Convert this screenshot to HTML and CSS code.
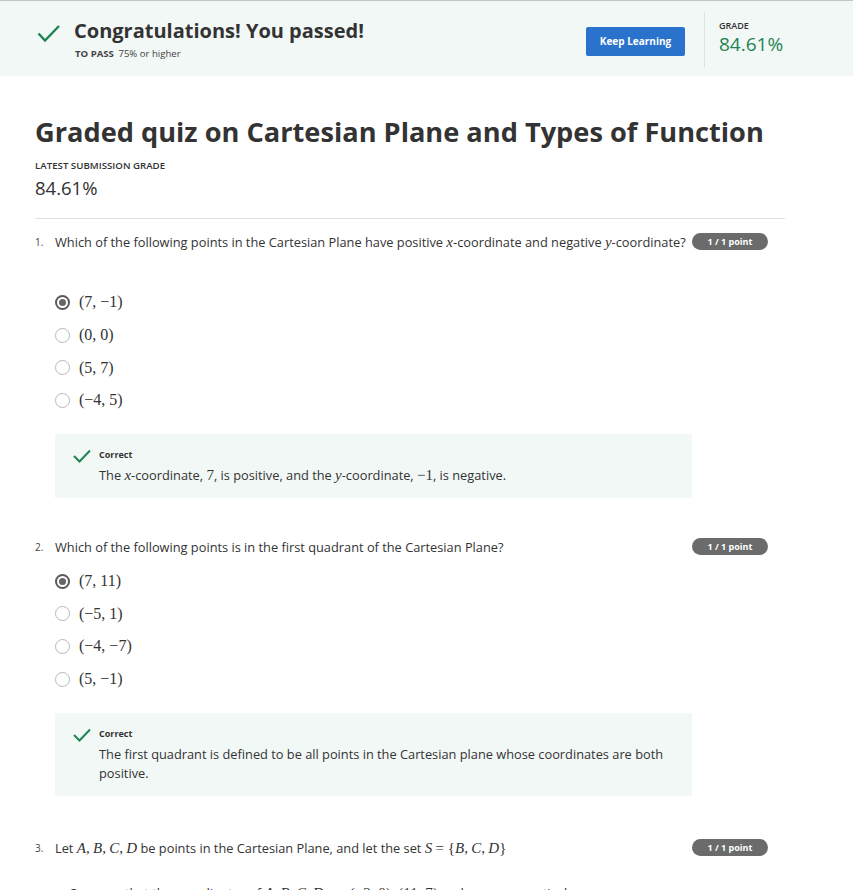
FILE: index.html
```html
<!DOCTYPE html>
<html>
<head>
<meta charset="utf-8">
<link rel="stylesheet" href="styles.css">
</head>
<body>
<header class="banner">
  <div class="banner-inner">
    <div class="pass">
      <svg class="pass-icon" width="24" height="20" viewBox="0 0 24 20"><path d="M1.5 9.5 L8 16.5 L22 2" fill="none" stroke="#1f8354" stroke-width="2.4"/></svg>
      <div class="pass-text">
        <div class="pass-title">Congratulations! You passed!</div>
        <div class="pass-sub"><b>TO PASS</b> 75% or higher</div>
      </div>
    </div>
    <div class="actions">
      <button class="btn">Keep Learning</button>
      <div class="divider"></div>
      <div class="grade">
        <div class="grade-label">GRADE</div>
        <div class="grade-value">84.61%</div>
      </div>
    </div>
  </div>
</header>

<main class="content">
  <h1 class="title">Graded quiz on Cartesian Plane and Types of Function</h1>
  <div class="latest-label">LATEST SUBMISSION GRADE</div>
  <div class="latest-value">84.61%</div>
  <hr class="sep">

  <section class="question q1">
    <div class="q-head">
      <span class="q-num">1.</span>
      <span class="q-text">Which of the following points in the Cartesian Plane have positive <i class="m">x</i>-coordinate and negative <i class="m">y</i>-coordinate?</span>
      <span class="badge">1 / 1 point</span>
    </div>
    <ul class="options first-gap">
      <li><span class="radio on"></span><span class="math">(7, −1)</span></li>
      <li><span class="radio"></span><span class="math">(0, 0)</span></li>
      <li><span class="radio"></span><span class="math">(5, 7)</span></li>
      <li><span class="radio"></span><span class="math">(−4, 5)</span></li>
    </ul>
    <div class="feedback">
      <svg class="fb-icon" width="18" height="14" viewBox="0 0 18 14"><path d="M1 7 L6.5 12.5 L17 1.5" fill="none" stroke="#1f8354" stroke-width="2"/></svg>
      <div>
        <div class="fb-label">Correct</div>
        <div class="fb-text">The <i class="m">x</i>-coordinate, <span class="mr">7</span>, is positive, and the <i class="m">y</i>-coordinate, <span class="mr">−1</span>, is negative.</div>
      </div>
    </div>
  </section>

  <section class="question q2">
    <div class="q-head">
      <span class="q-num">2.</span>
      <span class="q-text">Which of the following points is in the first quadrant of the Cartesian Plane?</span>
      <span class="badge">1 / 1 point</span>
    </div>
    <ul class="options">
      <li><span class="radio on"></span><span class="math">(7, 11)</span></li>
      <li><span class="radio"></span><span class="math">(−5, 1)</span></li>
      <li><span class="radio"></span><span class="math">(−4, −7)</span></li>
      <li><span class="radio"></span><span class="math">(5, −1)</span></li>
    </ul>
    <div class="feedback">
      <svg class="fb-icon" width="18" height="14" viewBox="0 0 18 14"><path d="M1 7 L6.5 12.5 L17 1.5" fill="none" stroke="#1f8354" stroke-width="2"/></svg>
      <div>
        <div class="fb-label">Correct</div>
        <div class="fb-text">The first quadrant is defined to be all points in the Cartesian plane whose coordinates are both positive.</div>
      </div>
    </div>
  </section>

  <section class="question q3">
    <div class="q-head">
      <span class="q-num">3.</span>
      <span class="q-text">Let <i class="m">A</i><span class="mr">,</span> <i class="m">B</i><span class="mr">,</span> <i class="m">C</i><span class="mr">,</span> <i class="m">D</i> be points in the Cartesian Plane, and let the set <i class="m">S</i> <span class="mr">= {</span><i class="m">B</i><span class="mr">,</span> <i class="m">C</i><span class="mr">,</span> <i class="m">D</i><span class="mr">}</span></span>
      <span class="badge">1 / 1 point</span>
    </div>
    <p class="q-more">Suppose that the coordinates of <i class="m">A</i>, <i class="m">B</i>, <i class="m">C</i>, <i class="m">D</i> are <span class="mr">(−2, 0), (11, 7)</span> and so on respectively.</p>
  </section>
</main>
</body>
</html>
```

FILE: styles.css
```css
* { box-sizing: border-box; }
html, body { margin: 0; padding: 0; }
body {
  font-family: "Open Sans", "Liberation Sans", sans-serif;
  color: #333;
  background: #fff;
  overflow: hidden;
}

.banner {
  border-top: 1px solid #c4c6c6;
  background: #f2f8f6;
  height: 76px;
}
.banner-inner {
  width: 750px;
  margin-left: 35px;
  height: 75px;
  display: flex;
  align-items: center;
  justify-content: space-between;
}
.pass { display: flex; align-items: flex-start; }
.pass-icon { margin: 7px 0 0 2px; }
.pass-text { margin-left: 13px; margin-top: 1px; }
.pass-title {
  font-size: 20px;
  font-weight: 700;
  line-height: 26px;
  color: #333;
}
.pass-sub {
  font-size: 9.6px;
  line-height: 14px;
  margin-top: 3px;
  margin-left: 1px;
  color: #444;
}
.pass-sub b { font-weight: 700; margin-right: 2px; }

.actions { display: flex; align-items: center; }
.btn {
  width: 99px;
  height: 29px;
  background: #2a73cc;
  color: #fff;
  border: none;
  border-radius: 2px;
  font-family: "Open Sans", sans-serif;
  font-weight: 700;
  font-size: 10px;
  padding: 0;
  margin-top: 5px;
}
.divider {
  width: 1px;
  height: 55px;
  background: #dde2e0;
  margin: 2px 14px 0 19px;
}
.grade { width: 66px; padding-bottom: 2px; }
.grade-label { font-size: 9px; font-weight: 600; line-height: 12px; color: #333; }
.grade-value { font-size: 19px; line-height: 24px; color: #1f8354; }

.content { width: 750px; margin-left: 35px; }
.title {
  font-size: 27.2px;
  font-weight: 700;
  line-height: 36px;
  margin: 38px 0 0;
  color: #333;
  white-space: nowrap;
}
.latest-label {
  margin-top: 9px;
  font-size: 9.7px;
  font-weight: 600;
  line-height: 14px;
  color: #333;
}
.latest-value {
  margin-top: 3px;
  font-size: 18.5px;
  line-height: 24px;
  color: #333;
}
.sep {
  border: none;
  border-top: 1px solid #e1e1e1;
  margin: 18px 0 0;
}

.q-head { display: flex; align-items: center; position: relative; height: 18px; }
.q-num { width: 20px; font-size: 10px; color: #444; }
.q-text { font-size: 12.8px; line-height: 18px; color: #333; white-space: nowrap; }
.badge {
  position: absolute;
  left: 657px;
  top: 0;
  width: 76px;
  height: 17px;
  border-radius: 9px;
  background: #6b6b6b;
  color: #fff;
  font-size: 9px;
  font-weight: 700;
  line-height: 17px;
  text-align: center;
}
.m { font-family: "Liberation Serif", "DejaVu Serif", serif; font-style: italic; font-size: 15px; }
.mr { font-family: "Liberation Serif", "DejaVu Serif", serif; font-size: 15px; }

.q1 { margin-top: 14px; }
.q2 { margin-top: 40px; }
.q3 { margin-top: 43px; }

.options { list-style: none; margin: 0; padding: 0 0 0 20px; }
.options.first-gap { margin-top: 35px; }
.q2 .options { margin-top: 9px; }
.options li {
  display: flex;
  align-items: center;
  height: 32.7px;
}
.radio {
  width: 15px;
  height: 15px;
  border-radius: 50%;
  border: 1.5px solid #b8b8b8;
  margin-right: 9px;
  flex: none;
  position: relative;
}
.radio.on { border: 2px solid #5a5a5a; }
.radio.on::after {
  content: "";
  position: absolute;
  left: 2px; top: 2px;
  width: 7px; height: 7px;
  border-radius: 50%;
  background: #666;
}
.math {
  font-family: "Liberation Serif", "DejaVu Serif", serif;
  font-size: 16px;
  color: #333;
}

.feedback {
  margin: 17px 0 0 20px;
  width: 637px;
  background: #f2f8f6;
  display: flex;
  align-items: flex-start;
  padding: 14px 20px 13px 18px;
}
.fb-icon { margin-top: 1px; margin-right: 8px; flex: none; }
.fb-label { font-size: 9px; font-weight: 700; line-height: 14px; color: #333; }
.fb-text { margin-top: 4px; font-size: 12.8px; line-height: 19px; color: #333; }

.q-more { margin: 27px 0 0 35px; font-size: 12.8px; line-height: 18px; color: #333; }
```
